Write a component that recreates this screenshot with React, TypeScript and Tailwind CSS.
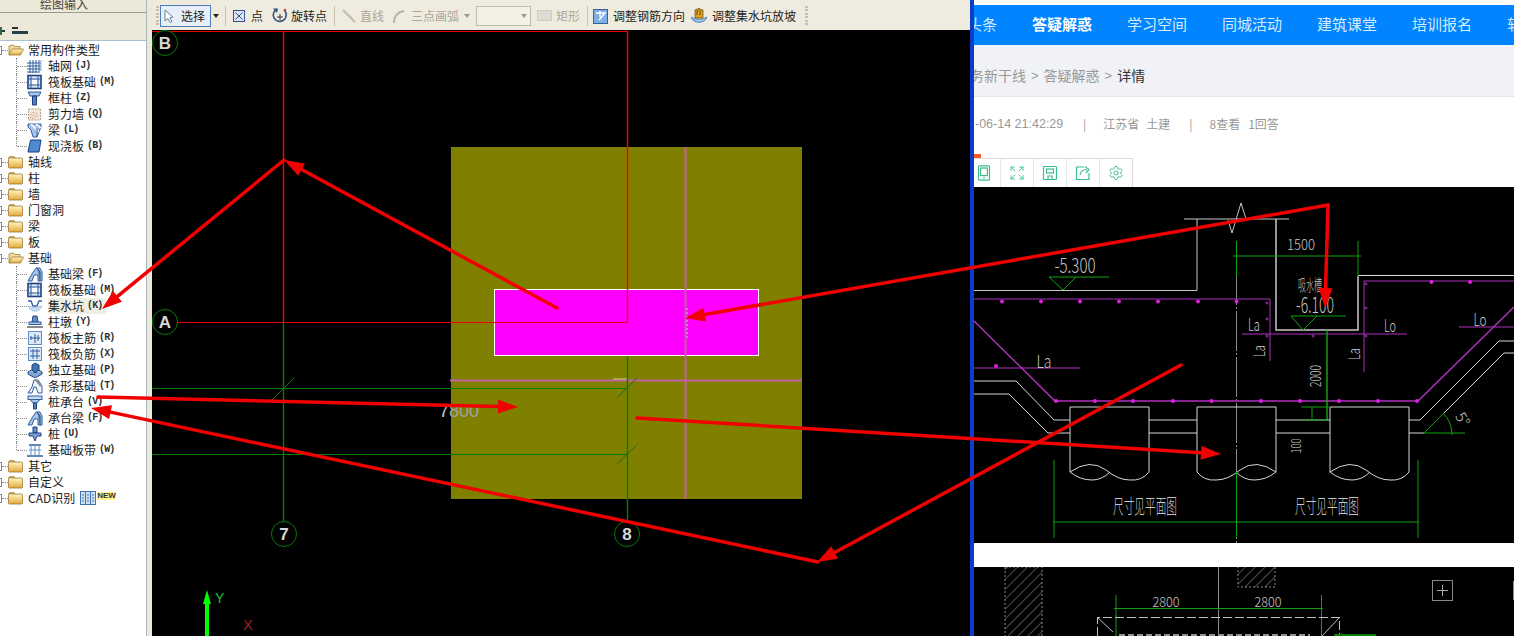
import React from "react";
import { Expand, Settings } from "lucide-react";

const CJK = '"Noto Sans CJK SC", "Liberation Sans", sans-serif';

function Folder({ open }: { open?: boolean }) {
  return (
    <svg width="16" height="14" viewBox="0 0 16 14" className="shrink-0">
      <defs>
        <linearGradient id="fold" x1="0" y1="0" x2="0" y2="1">
          <stop offset="0" stopColor="#fff6c8" />
          <stop offset="1" stopColor="#e2a93a" />
        </linearGradient>
      </defs>
      {open ? (
        <>
          <path d="M1 3 L5 2 L7 3.5 L12 3.5 L12 6 L1 12 Z" fill="#f5dc9a" stroke="#a08038" strokeWidth="0.8" />
          <path d="M1 12 L4 6 L15.5 6 L12.5 12 Z" fill="url(#fold)" stroke="#9a7a30" strokeWidth="0.8" />
        </>
      ) : (
        <>
          <path d="M0.5 3 L1.5 1.5 L6 1.5 L7 3 Z" fill="#f4dc90" stroke="#a08038" strokeWidth="0.7" />
          <rect x="0.5" y="3" width="14" height="10" rx="1" fill="url(#fold)" stroke="#9a7a30" strokeWidth="0.8" />
        </>
      )}
    </svg>
  );
}

function TreeIcon({ n }: { n: string }) {
  const b = "#2f5f9f";
  const l = "#a9c6e8";
  const inner = () => {
    switch (n) {
      case "grid":
        return (
          <g stroke={b} strokeWidth="1" fill="none">
            <path d="M0 5H14M0 8H14M0 11H14M0 14H11M3 2V15M6 2V15M9 2V15M12 2V15" />
            <path d="M12 3h3M12 6h3M12 9h3M12 12h3" stroke="#7fa5d5" />
          </g>
        );
      case "raft":
        return (
          <g>
            <rect x="1" y="1.5" width="13" height="13" fill="#dbe8f6" stroke="#1f3f7f" strokeWidth="1.6" />
            <path d="M4 1.5V14.5M11 1.5V14.5M1 5H14M1 11H14" stroke={b} strokeWidth="1" />
            <rect x="5" y="6" width="5" height="4" fill="#fff" />
          </g>
        );
      case "col":
        return (
          <g>
            <path d="M1 2H14L12 6H3Z" fill={l} stroke={b} />
            <path d="M5.5 6H9.5V15H5.5Z" fill="#4f82c0" stroke="#1f3f7f" />
          </g>
        );
      case "wall":
        return (
          <g>
            <rect x="1.5" y="3" width="12" height="11" fill="#f4e8d8" stroke="#b0a090" strokeDasharray="2 1" />
            <path d="M3 12L11 6M5 13L12 9M3 9L7 6" stroke="#d08060" strokeDasharray="1 1" />
          </g>
        );
      case "beam":
        return (
          <g>
            <path d="M1 2H14V5L10 15H6L4 8L1 5Z" fill={l} stroke={b} />
            <path d="M4 2L12 10M9 2L14 6" stroke="#fff" strokeWidth="1.6" />
            <path d="M10 6V15" stroke={b} />
          </g>
        );
      case "slab":
        return <path d="M3.5 2H14L12 14H1Z" fill="#4f8ad0" stroke="#1f3f7f" />;
      case "fbeam":
        return (
          <g>
            <path d="M1 15L5 8L9 2H13L15 6V15H11V9H7L5 15Z" fill={l} stroke={b} />
            <path d="M10 2L13 6V15" stroke="#1f3f7f" fill="#5f8fc5" />
          </g>
        );
      case "pit":
        return (
          <g>
            <path d="M1 3L4 3L6 8H10L12 3L15 3" fill="none" stroke={b} strokeWidth="1.3" />
            <path d="M1 8C4 15 12 15 15 8L10 9H6Z" fill="#c9dcf2" stroke="#7fa5d5" strokeDasharray="1 1" />
          </g>
        );
      case "pier":
        return (
          <g>
            <path d="M6 2H10L11 8H5Z" fill="#5f8fc5" stroke="#1f3f7f" />
            <rect x="2" y="8" width="12" height="2.5" fill={l} stroke={b} />
            <path d="M0 13H16" stroke="#8a8a8a" strokeWidth="2" />
          </g>
        );
      case "main":
      case "neg":
        return (
          <g>
            <rect x="1.5" y="1.5" width="13" height="13" fill="#dde9f7" stroke="#5f8fc5" />
            {n === "main" ? (
              <path d="M8 4V13M3 8H13M4 6V10M11 5V11" stroke="#2f5f9f" fill="none" />
            ) : (
              <path d="M3 5H13M3 10H13M6 3V13M10 3V13" stroke="#2f5f9f" fill="none" />
            )}
          </g>
        );
      case "iso":
        return (
          <g>
            <path d="M1 10L8 14L15 10L8 6Z" fill={l} stroke="#1f3f7f" />
            <path d="M1 10V12L8 16L15 12V10" fill="#7fa5d5" stroke="#1f3f7f" />
            <path d="M5 3L8 1L12 3V8L8 11L5 8Z" fill="#3f72b0" stroke="#1f3f7f" />
          </g>
        );
      case "strip":
        return (
          <g>
            <path d="M1 15L5 9L7 2H11L15 8V15H11L9 9H7L5 15Z" fill="#eef4fb" stroke={b} />
            <path d="M9 2L14 8" stroke="#8a8a8a" strokeWidth="2" />
          </g>
        );
      case "cap":
        return (
          <g>
            <rect x="1" y="2" width="14" height="3.5" fill="#c9dcf2" stroke={b} />
            <path d="M3 5.5H13L10 9H6Z" fill={l} stroke={b} />
            <path d="M6.5 9H9.5V15H6.5Z" fill="#4f82c0" stroke="#1f3f7f" />
          </g>
        );
      case "pile":
        return (
          <g>
            <path d="M6 1H10V7H6Z" fill="#5f8fc5" stroke="#1f3f7f" />
            <path d="M2 7H14V10H10L8 15L6 10H2Z" fill="#7fa5d5" stroke="#1f3f7f" />
          </g>
        );
      case "band":
        return (
          <g>
            <path d="M2 3H14M0 14H16" stroke={b} strokeWidth="1.6" />
            <path d="M4 3V14M8 3V14M12 3V14M2 8H14" stroke="#5f8fc5" />
          </g>
        );
      default:
        return null;
    }
  };
  return (
    <svg width="16" height="16" viewBox="0 0 16 16" className="shrink-0">
      {inner()}
    </svg>
  );
}

function Label({ t, k, sel }: { t: string; k?: string; sel?: boolean }) {
  return (
    <span className={`ml-[4px] flex h-4 items-center whitespace-nowrap pr-1 text-[12px] leading-4 text-[#1c1c1c] ${sel ? "bg-[#efeee2]" : ""}`}>
      {t}
      {k && <span className="ml-[3px] font-['Liberation_Mono'] text-[10px] leading-4 font-bold tracking-[-0.9px] text-[#333]">({k})</span>}
    </span>
  );
}

function Leaf({ icon, t, k, last, sel }: { icon: string; t: string; k: string; last?: boolean; sel?: boolean }) {
  return (
    <div className="flex h-4 items-center pl-[16px]">
      <div className={`w-0 self-start border-l border-dotted border-[#888] ${last ? "h-2" : "h-4"}`} />
      <div className="h-0 w-[10px] border-t border-dotted border-[#888]" />
      <TreeIcon n={icon} />
      <div className="w-[1px]" />
      <Label t={t} k={k} sel={sel} />
    </div>
  );
}

function Group({ t, open, extra }: { t: string; open?: boolean; extra?: React.ReactNode }) {
  return (
    <div className="flex h-4 items-center">
      <div className="-ml-[7px] h-[9px] w-[9px] shrink-0 border border-[#8a8a8a] bg-white" />
      <div className="h-0 w-[6px] border-t border-dotted border-[#888]" />
      <Folder open={open} />
      <Label t={t} />
      {extra}
    </div>
  );
}

const common: [string, string, string][] = [
  ["grid", "轴网", "J"],
  ["raft", "筏板基础", "M"],
  ["col", "框柱", "Z"],
  ["wall", "剪力墙", "Q"],
  ["beam", "梁", "L"],
  ["slab", "现浇板", "B"],
];
const found: [string, string, string][] = [
  ["fbeam", "基础梁", "F"],
  ["raft", "筏板基础", "M"],
  ["pit", "集水坑", "K"],
  ["pier", "柱墩", "Y"],
  ["main", "筏板主筋", "R"],
  ["neg", "筏板负筋", "X"],
  ["iso", "独立基础", "P"],
  ["strip", "条形基础", "T"],
  ["cap", "桩承台", "V"],
  ["fbeam", "承台梁", "F"],
  ["pile", "桩", "U"],
  ["band", "基础板带", "W"],
];

function Sidebar() {
  return (
    <div className="flex w-[152px] shrink-0 bg-[#ece9d8]">
      <div className="flex w-[147px] flex-col border-r border-[#a9b4c2]">
        <div className="h-[13px] overflow-hidden border-b border-[#9a9a90] pr-[18px] text-center text-[12px] leading-[7px] text-[#444]">绘图输入</div>
        <div className="flex h-[27px] items-center bg-[#ece9d8] pt-[8px]">
          <div className="relative h-[10px] w-[5px]">
            <div className="absolute left-0 top-[4px] h-[2px] w-[5px] bg-[#234]" />
            <div className="absolute left-0 top-[1px] h-[8px] w-[2px] bg-[#2a6a4a]" />
          </div>
          <div className="ml-[7px] flex w-[16px] flex-col items-start gap-[2px]">
            <div className="h-[2px] w-[6px] bg-[#333]" />
            <div className="h-[3px] w-[16px] bg-[#25404a]" />
          </div>
        </div>
        <div className="flex-1 overflow-hidden border-t border-[#a9c0d0] bg-white pt-[1px]">
          <Group t="常用构件类型" open />
          {common.map(([i, t, k], idx) => (
            <Leaf key={t} icon={i} t={t} k={k} last={idx === common.length - 1} />
          ))}
          {["轴线", "柱", "墙", "门窗洞", "梁", "板"].map((t) => (
            <Group key={t} t={t} />
          ))}
          <Group t="基础" open />
          {found.map(([i, t, k], idx) => (
            <Leaf key={t + k} icon={i} t={t} k={k} last={idx === found.length - 1} sel={t === "集水坑"} />
          ))}
          <Group t="其它" />
          <Group t="自定义" />
          <Group
            t="CAD识别"
            extra={
              <div className="relative flex items-center">
                <svg width="16" height="14" viewBox="0 0 16 14" className="ml-[1px]">
                  <rect x="0.5" y="0.5" width="15" height="13" fill="#cfe0f5" stroke="#3f72b0" />
                  <path d="M5.5 1V13M10.5 1V13M2 4H4M2 7H4M2 10H4M7 4H9M7 7H9M7 10H9M12 4H14M12 7H14M12 10H14" stroke="#3f72b0" fill="none" />
                </svg>
                <span className="ml-[1px] -mt-[5px] bg-[#fff58a] font-['Liberation_Sans'] text-[8px] font-bold leading-[8px] text-[#333]">NEW</span>
              </div>
            }
          />
        </div>
      </div>
    </div>
  );
}

function Sep({ ml }: { ml: string }) {
  return <div className={`h-[20px] w-px shrink-0 bg-[#c5c2b0] ${ml}`} />;
}
function Caret({ ml, gray }: { ml: string; gray?: boolean }) {
  return <div className={`h-0 w-0 shrink-0 border-x-[3.5px] border-t-[4px] border-x-transparent ${gray ? "border-t-[#999]" : "border-t-[#222]"} ${ml}`} />;
}
function Grip({ ml }: { ml: string }) {
  return (
    <div className={`flex h-[22px] w-[3px] shrink-0 flex-col justify-between py-[1px] ${ml}`}>
      {[0, 1, 2, 3, 4, 5].map((i) => (
        <div key={i} className="h-[2px] w-[3px] bg-[#c4c1ae]" />
      ))}
    </div>
  );
}

function Toolbar() {
  return (
    <div className="flex h-[30px] shrink-0 items-center bg-[#efecdf] pt-px text-[12px] text-[#1c1c1c]">
      <Grip ml="ml-[4px]" />
      <div className="ml-[1px] flex h-[22px] w-[51px] shrink-0 items-center border border-[#4f7cb8] bg-[#e6eefa]">
        <svg width="10" height="14" viewBox="0 0 10 14" className="ml-[3px]">
          <path d="M1 1V12L3.8 9.5L6 13.5L8 12.5L5.8 8.8L9 8.2Z" fill="#fff" stroke="#6a7f9a" />
        </svg>
        <span className="ml-[7px]">选择</span>
      </div>
      <Caret ml="ml-[2px]" />
      <Sep ml="ml-[6px]" />
      <svg width="12" height="12" viewBox="0 0 12 12" className="ml-[7px] shrink-0">
        <rect x="0.5" y="0.5" width="11" height="11" fill="#dfe6f5" stroke="#35508f" />
        <path d="M2.5 2.5L9.5 9.5M9.5 2.5L2.5 9.5" stroke="#35508f" />
      </svg>
      <span className="ml-[6px] w-[12px] shrink-0">点</span>
      <svg width="16" height="17" viewBox="0 0 16 17" className="ml-[9px] shrink-0">
        <path d="M3 3.5A6.5 6.5 0 1 0 12 3" fill="none" stroke="#2f4f7f" strokeWidth="1.6" />
        <path d="M1 1.5L6 1.5L5 6Z" fill="#2f4f7f" />
        <path d="M8 7V13M5 10H11" stroke="#333" />
        <circle cx="13" cy="3" r="1.3" fill="#d04040" />
      </svg>
      <span className="ml-[3px] w-[36px] shrink-0">旋转点</span>
      <Sep ml="ml-[7px]" />
      <svg width="14" height="14" viewBox="0 0 14 14" className="ml-[7px] shrink-0">
        <path d="M1 1L13 13" stroke="#bdbbae" strokeWidth="2" />
      </svg>
      <span className="ml-[4px] w-[24px] shrink-0 text-[#a8a698]">直线</span>
      <svg width="14" height="14" viewBox="0 0 14 14" className="ml-[8px] shrink-0">
        <path d="M2 14C2 7 6 3 12 2" fill="none" stroke="#b5b3a6" strokeWidth="2" />
      </svg>
      <span className="ml-[5px] w-[48px] shrink-0 text-[#a8a698]">三点画弧</span>
      <Caret ml="ml-[5px]" gray />
      <div className="ml-[6px] flex h-[20px] w-[55px] shrink-0 items-center justify-end border border-[#bdbbae] bg-[#f3f1e6] pr-[3px]">
        <Caret ml="" gray />
      </div>
      <svg width="15" height="11" viewBox="0 0 15 11" className="ml-[6px] shrink-0">
        <rect x="0.5" y="0.5" width="14" height="10" fill="#dedcd0" stroke="#cfcdc0" />
      </svg>
      <span className="ml-[4px] w-[24px] shrink-0 text-[#a8a698]">矩形</span>
      <Sep ml="ml-[7px]" />
      <svg width="15" height="16" viewBox="0 0 15 16" className="ml-[5px] shrink-0">
        <rect x="0.5" y="1.5" width="14" height="14" fill="#7fb0e5" stroke="#35609f" />
        <path d="M3 5H12L6 12M7 3V9" fill="none" stroke="#fff" strokeWidth="1.4" />
      </svg>
      <span className="ml-[5px] w-[72px] shrink-0">调整钢筋方向</span>
      <svg width="16" height="18" viewBox="0 0 16 18" className="ml-[6px] shrink-0">
        <path d="M0 10C2 17 14 17 16 10L12 12H4Z" fill="#a9c6e8" stroke="#4f82c0" />
        <path d="M4 11V3L6 2V8L7 1.5L9 1.5V8L10 2.5L12 3V11Z" fill="#e0a020" stroke="#7a5a10" strokeWidth="0.8" />
      </svg>
      <span className="ml-[5px] w-[84px] shrink-0">调整集水坑放坡</span>
      <Grip ml="ml-[9px]" />
    </div>
  );
}

function Ring({ x, y, t }: { x: number; y: number; t: string }) {
  return (
    <g>
      <circle cx={x} cy={y} r="12.5" fill="#000" stroke="#0a7a0a" />
      <text x={x} y={y + 6} textAnchor="middle" fontSize="17" fontFamily="Liberation Sans" fontWeight="bold" fill="#d8d8d8">
        {t}
      </text>
    </g>
  );
}

function Canvas() {
  return (
    <svg viewBox="152 30 818 606" className="block h-[606px] w-[818px] bg-black">
      <rect x="451" y="147" width="351" height="352" fill="#808000" />
      <rect x="494.5" y="289.5" width="264" height="66" fill="#ff00ff" stroke="#fff" />
      <path d="M685.5 147V499M450 380.5H802" stroke="#c060a0" strokeWidth="2" fill="none" />
      <path d="M687 308V340" stroke="#c878e0" strokeWidth="2" strokeDasharray="2 2" />
      <path d="M613 379H628" stroke="#b0a060" strokeWidth="2" />
      <path d="M152 31.5H628M176 322.5H628" stroke="#f00000" fill="none" />
      <path d="M627.5 31V322M283.5 31V322" stroke="#ff0000" strokeWidth="1.4" fill="none" />
      <path d="M283.5 322V522M627.5 356V522" stroke="#008000" strokeWidth="1.4" fill="none" />
      <path d="M152 388.5H627.5M152 454.5H627.5" stroke="#007a00" fill="none" />
      <path d="M272 400L294 378M617 398L637 378M617 464L637 445" stroke="#206a20" fill="none" />
      <Ring x={165} y={43} t="B" />
      <Ring x={165} y={322} t="A" />
      <Ring x={284} y={534} t="7" />
      <Ring x={627} y={534} t="8" />
      <text x="439" y="417" fontSize="18" fontFamily="Liberation Sans" fill="#c8c8c8">
        7<tspan fill="#a0a0a8">800</tspan>
      </text>
      <path d="M207 636V602" stroke="#00ff00" strokeWidth="4" />
      <path d="M207 590L203 604H211Z" fill="#00ff00" />
      <text x="215" y="603" fontSize="14" fontFamily="Liberation Sans" fill="#20c040">Y</text>
      <text x="243" y="630" fontSize="15" fontFamily="Liberation Sans" fill="#a02020">X</text>
    </svg>
  );
}

const G = "#10a010";
const W = "#d6d6d6";
const M = "#b030c0";
const DOT = "#e020e0";

function Line({ p, c, w = 1 }: { p: string; c: string; w?: number }) {
  return <polyline points={p} fill="none" stroke={c} strokeWidth={w} />;
}
function T({ x, y, s, w, c = "#c8c8c8", r, children }: { x: number; y: number; s: number; w: number; c?: string; r?: number; children: string }) {
  return (
    <text
      x={x}
      y={y}
      fontSize={s}
      fill={c}
      textAnchor="middle"
      textLength={w}
      lengthAdjust="spacingAndGlyphs"
      fontFamily={CJK}
      fontWeight="300"
      transform={r !== undefined ? `rotate(${r} ${x} ${y})` : undefined}
    >
      {children}
    </text>
  );
}
function Pile({ x, flip }: { x: number; flip?: boolean }) {
  return (
    <g transform={flip ? `translate(${2 * x + 79} 0) scale(-1 1)` : undefined}>
      <polyline points={`${x},472 ${x},407 ${x + 79},407 ${x + 79},472`} fill="none" stroke={W} />
      <path d={`M${x} 472Q${x + 20} 458 ${x + 36} 470Q${x + 48} 480 ${x + 60} 480Q${x + 72} 481 ${x + 79} 472M${x} 472Q${x + 10} 480 ${x + 22} 480Q${x + 32} 480 ${x + 40} 472`} fill="none" stroke={W} />
    </g>
  );
}

function CadTop() {
  const top = [1002, 1041, 1080, 1119, 1158, 1198, 1236.5];
  const bot = [1056, 1095, 1133, 1173, 1211.5, 1261, 1300, 1339, 1378, 1417];
  return (
    <svg viewBox="974 187 540 356" className="block h-[356px] w-[540px] bg-black">
      <Line c="#c8c8c8" p="1184,219 1289,219" />
      <Line c="#c8c8c8" p="1197,219 1197,290.5 974,290.5" />
      <Line c="#c8c8c8" w={1.5} p="1276,219 1276,330 1358,330 1358,276" />
      <Line c="#e0e0e0" p="1358,275.5 1514,275.5" />
      <Line c="#c8c8c8" p="1228,220 1232,233 1241,203 1246,219" />
      <path d="M1236.5 265V543" stroke="#8a8a8a" strokeDasharray="40 2 2 2" />
      <Line c={G} p="1233,256 1361,256" />
      <Line c={G} p="1236.5,241 1236.5,277" />
      <Line c={G} p="1358,241 1358,277" />
      <T x={1301} y={250} s={15} w={28}>1500</T>
      <T x={1075} y={273} s={21} w={41}>-5.300</T>
      <Line c={G} p="1049,277 1109,277" />
      <Line c={G} p="1049,277 1063,290 1076,277" />
      <Line c={M} p="974,299 1270,299 1270,361" />
      <Line c={M} p="1242,334 1407,334" />
      <Line c={M} p="1514,281 1364,281 1364,372" />
      <Line c={M} w={1.5} p="974,321 1055,401 1418,401 1514,307" />
      <Line c={M} p="974,368 1080,368" />
      <Line c={M} p="1459,327 1514,327" />
      {top.map((x) => <circle key={x} cx={x} cy={301.5} r={2} fill={DOT} />)}
      {bot.map((x) => <circle key={x} cx={x} cy={401} r={2} fill={DOT} />)}
      <circle cx="1431.5" cy="282" r="2" fill={DOT} />
      <circle cx="1470" cy="282" r="2" fill={DOT} />
      <circle cx="996" cy="366" r="2" fill={DOT} />
      {[[1267, 303], [1267, 319], [1267, 336], [1366, 284], [1366, 308], [1366, 336], [1313, 336]].map(([x, y]) => (
        <circle key={x + "" + y} cx={x} cy={y} r={1} fill="none" stroke={M} />
      ))}
      <T x={1254} y={331} s={17} w={12}>La</T>
      <T x={1390} y={332} s={17} w={12}>Lo</T>
      <T x={1480} y={326} s={17} w={13}>Lo</T>
      <T x={1044} y={368} s={18} w={15}>La</T>
      <T x={1265} y={351} s={16} w={12} r={-90}>La</T>
      <T x={1360} y={354} s={16} w={12} r={-90}>La</T>
      <T x={1310} y={291} s={16} w={24}>吸水槽</T>
      <T x={1315} y={313} s={22} w={38}>-6.100</T>
      <Line c={G} p="1291,316 1346,316" />
      <Line c={G} p="1291,316 1303,330 1317,316" />
      <Line c={G} w={1.5} p="1327,330 1327,420" />
      <T x={1321} y={376} s={15} w={22} r={-90}>2000</T>
      <Line c={W} p="974,381 1016,381 1054,420 1070,420" />
      <Line c={W} p="974,394 1009,394 1048,433 1070,433" />
      <Line c={W} p="1514,341 1499,341 1420,420 1409,420" />
      <Line c={W} p="1514,353 1504,353 1424,433 1409,433" />
      <Pile x={1070} />
      <Pile x={1197} flip />
      <Pile x={1330} />
      <Line c={W} p="1149,420 1197,420" />
      <Line c={W} p="1149,433 1197,433" />
      <Line c={W} p="1276,420 1330,420" />
      <Line c={W} p="1276,433 1330,433" />
      <Line c={G} p="1301,407 1329,407" />
      <Line c={G} p="1301,420 1329,420" />
      <Line c={G} p="1312,407 1312,420" />
      <T x={1301} y={446} s={14} w={15} r={-90}>100</T>
      <Line c={G} p="1054,460 1054,538" />
      <Line c={G} p="1236.5,472 1236.5,538" />
      <Line c={G} p="1418,460 1418,538" />
      <Line c={G} p="1053,522 1419,522" />
      <T x={1145} y={514} s={20} w={64}>尺寸见平面图</T>
      <T x={1327} y={514} s={20} w={64}>尺寸见平面图</T>
      <Line c={G} p="1424,433 1465,433" />
      <Line c={G} p="1424,433 1444,413" />
      <path d="M1443 413Q1452 422 1452 435" stroke={G} fill="none" />
      <T x={1458} y={422} s={15} w={13} r={60}>5°</T>
    </svg>
  );
}

function CadBottom() {
  return (
    <svg viewBox="974 567 540 69" className="block h-[69px] w-[540px] bg-black">
      <defs>
        <pattern id="hatch" width="7" height="7" patternUnits="userSpaceOnUse" patternTransform="rotate(45)">
          <path d="M0 0V7" stroke="#9a9a9a" strokeWidth="1" />
        </pattern>
      </defs>
      <rect x="1005" y="567" width="37" height="70" fill="url(#hatch)" stroke="#8a8a8a" strokeDasharray="2 2" />
      <rect x="1238" y="560" width="37" height="27" fill="url(#hatch)" stroke="#8a8a8a" strokeDasharray="2 2" />
      <path d="M1218.5 567V636" stroke="#8a8a8a" />
      <path d="M1116 595V636M1321.5 595V636M1114 608.5H1323" stroke={G} fill="none" />
      <T x={1166} y={607} s={14} w={27}>2800</T>
      <T x={1268} y={607} s={14} w={27}>2800</T>
      <path d="M1097.5 636V617.5H1339.5V636" stroke="#c0c0c0" strokeDasharray="9 3" fill="none" />
      <path d="M1097 617L1113 632M1340 617L1322 636" stroke="#c0c0c0" />
      <path d="M1119 635H1310" stroke="#909090" strokeWidth="2" strokeDasharray="6 3" />
      <path d="M1334 635H1376" stroke="#0a7a0a" strokeWidth="2" />
      <rect x="1432.5" y="580.5" width="20" height="20" fill="none" stroke="#888" />
      <path d="M1442.5 585V596M1437 590.5H1448" stroke="#aaa" />
      <path d="M1513.5 581V600" stroke="#888" />
    </svg>
  );
}

function ToolCell({ children }: { children: React.ReactNode }) {
  return <div className="flex h-full w-[33px] shrink-0 items-center justify-center border-r border-[#e3e8e6]">{children}</div>;
}

function WebPage() {
  const nav = ["头条", "答疑解惑", "学习空间", "同城活动", "建筑课堂", "培训报名", "软件下载"];
  const icon = "h-4 w-4 text-[#3ebd8c]";
  return (
    <div className="flex w-[540px] shrink-0 flex-col overflow-hidden bg-white">
      <div className="h-[5px] shrink-0 bg-white" />
      <div className="flex h-[40px] shrink-0 items-center gap-[35px] whitespace-nowrap bg-[#0084ff] pb-[2px] text-[15px] text-[#d5ecff]">
        {nav.map((n, i) => (
          <span key={n} className={`${i === 0 ? "-ml-[7px]" : ""} ${i === 1 ? "font-bold text-white" : ""}`}>{n}</span>
        ))}
      </div>
      <div className="flex h-[52px] shrink-0 items-center whitespace-nowrap border-b border-[#e6e6e6] bg-[#f0f2f5] pt-[10px] text-[14px] text-[#999]">
        <span className="-ml-[18px]">服务新干线</span>
        <span className="mx-[5px] font-['Liberation_Sans'] text-[13px]">&gt;</span>
        <span>答疑解惑</span>
        <span className="mx-[5px] font-['Liberation_Sans'] text-[13px]">&gt;</span>
        <span className="text-[#333]">详情</span>
      </div>
      <div className="flex h-[57px] shrink-0 items-center whitespace-nowrap pb-[3px] pl-px text-[12px] text-[#999]">
        <span className="w-[90px] font-['Liberation_Sans'] text-[12.5px]">-06-14 21:42:29</span>
        <span className="ml-[18px]">|</span>
        <span className="ml-[17px]">江苏省</span>
        <span className="ml-[7px]">土建</span>
        <span className="ml-[19px]">|</span>
        <span className="ml-[17px]">8查看</span>
        <span className="ml-[8px]">1回答</span>
      </div>
      <div className="h-1 w-[7px] shrink-0 bg-[#ff5a26]" />
      <div className="flex h-[29px] w-[159px] shrink-0 items-center overflow-hidden border-r border-t border-[#dcdcdc]">
        <div className="-ml-[6px] flex h-full">
          <ToolCell>
            <svg viewBox="0 0 14 16" className={icon} fill="none" stroke="currentColor" strokeWidth="1.2">
              <rect x="1.5" y="0.8" width="11" height="14.4" rx="1" />
              <rect x="3.6" y="3" width="6.8" height="7.6" />
              <path d="M6 13H8" />
            </svg>
          </ToolCell>
          <ToolCell><Expand className={icon} strokeWidth={1.4} /></ToolCell>
          <ToolCell>
            <svg viewBox="0 0 16 16" className={icon} fill="none" stroke="currentColor" strokeWidth="1.2">
              <rect x="1.5" y="1.5" width="13" height="13" rx="1" />
              <rect x="4.5" y="4" width="7" height="4" />
              <path d="M6 14.5V11H10V14.5" />
            </svg>
          </ToolCell>
          <ToolCell>
            <svg viewBox="0 0 16 16" className={icon} fill="none" stroke="currentColor" strokeWidth="1.2">
              <path d="M9 2H1.5V14.5H14V8" />
              <path d="M5 10C5.5 6 8 4.5 12 4.5M10 1.5L14 4.5L11 8" />
            </svg>
          </ToolCell>
          <ToolCell><Settings className={icon} strokeWidth={1.4} /></ToolCell>
        </div>
      </div>
      <CadTop />
      <div className="h-[24px] shrink-0 bg-white" />
      <CadBottom />
    </div>
  );
}

function Arrow({ a, b, head = true }: { a: [number, number]; b: [number, number]; head?: boolean }) {
  const dx = b[0] - a[0];
  const dy = b[1] - a[1];
  const len = Math.hypot(dx, dy);
  const ux = dx / len;
  const uy = dy / len;
  const hl = 20;
  const hw = 7;
  const bx = b[0] - ux * hl;
  const by = b[1] - uy * hl;
  const pts = `${b[0]},${b[1]} ${bx - uy * hw},${by + ux * hw} ${bx + uy * hw},${by - ux * hw}`;
  return (
    <g>
      <line x1={a[0]} y1={a[1]} x2={head ? bx : b[0]} y2={head ? by : b[1]} stroke="#f00000" strokeWidth="3.5" strokeLinecap="round" />
      {head && <polygon points={pts} fill="#f00000" />}
    </g>
  );
}

export default function App() {
  return (
    <div className="relative flex h-[636px] w-[1514px] overflow-hidden bg-[#ece9d8]" style={{ fontFamily: CJK }}>
      <Sidebar />
      <div className="flex w-[818px] shrink-0 flex-col">
        <Toolbar />
        <Canvas />
      </div>
      <div className="w-[4px] shrink-0 bg-[#0a3ec8]" />
      <WebPage />
      <svg viewBox="0 0 1514 636" className="pointer-events-none absolute inset-0 h-[636px] w-[1514px]">
        <Arrow a={[557, 308]} b={[284, 160]} />
        <Arrow a={[284, 160]} b={[102, 309]} />
        <Arrow a={[1328, 205]} b={[685, 318]} />
        <Arrow a={[1328, 205]} b={[1325, 308]} />
        <Arrow a={[98, 397]} b={[518, 407]} />
        <Arrow a={[818, 562]} b={[91, 408]} />
        <Arrow a={[1181, 365]} b={[817, 562]} />
        <Arrow a={[637, 418]} b={[1221, 454]} />
      </svg>
    </div>
  );
}
